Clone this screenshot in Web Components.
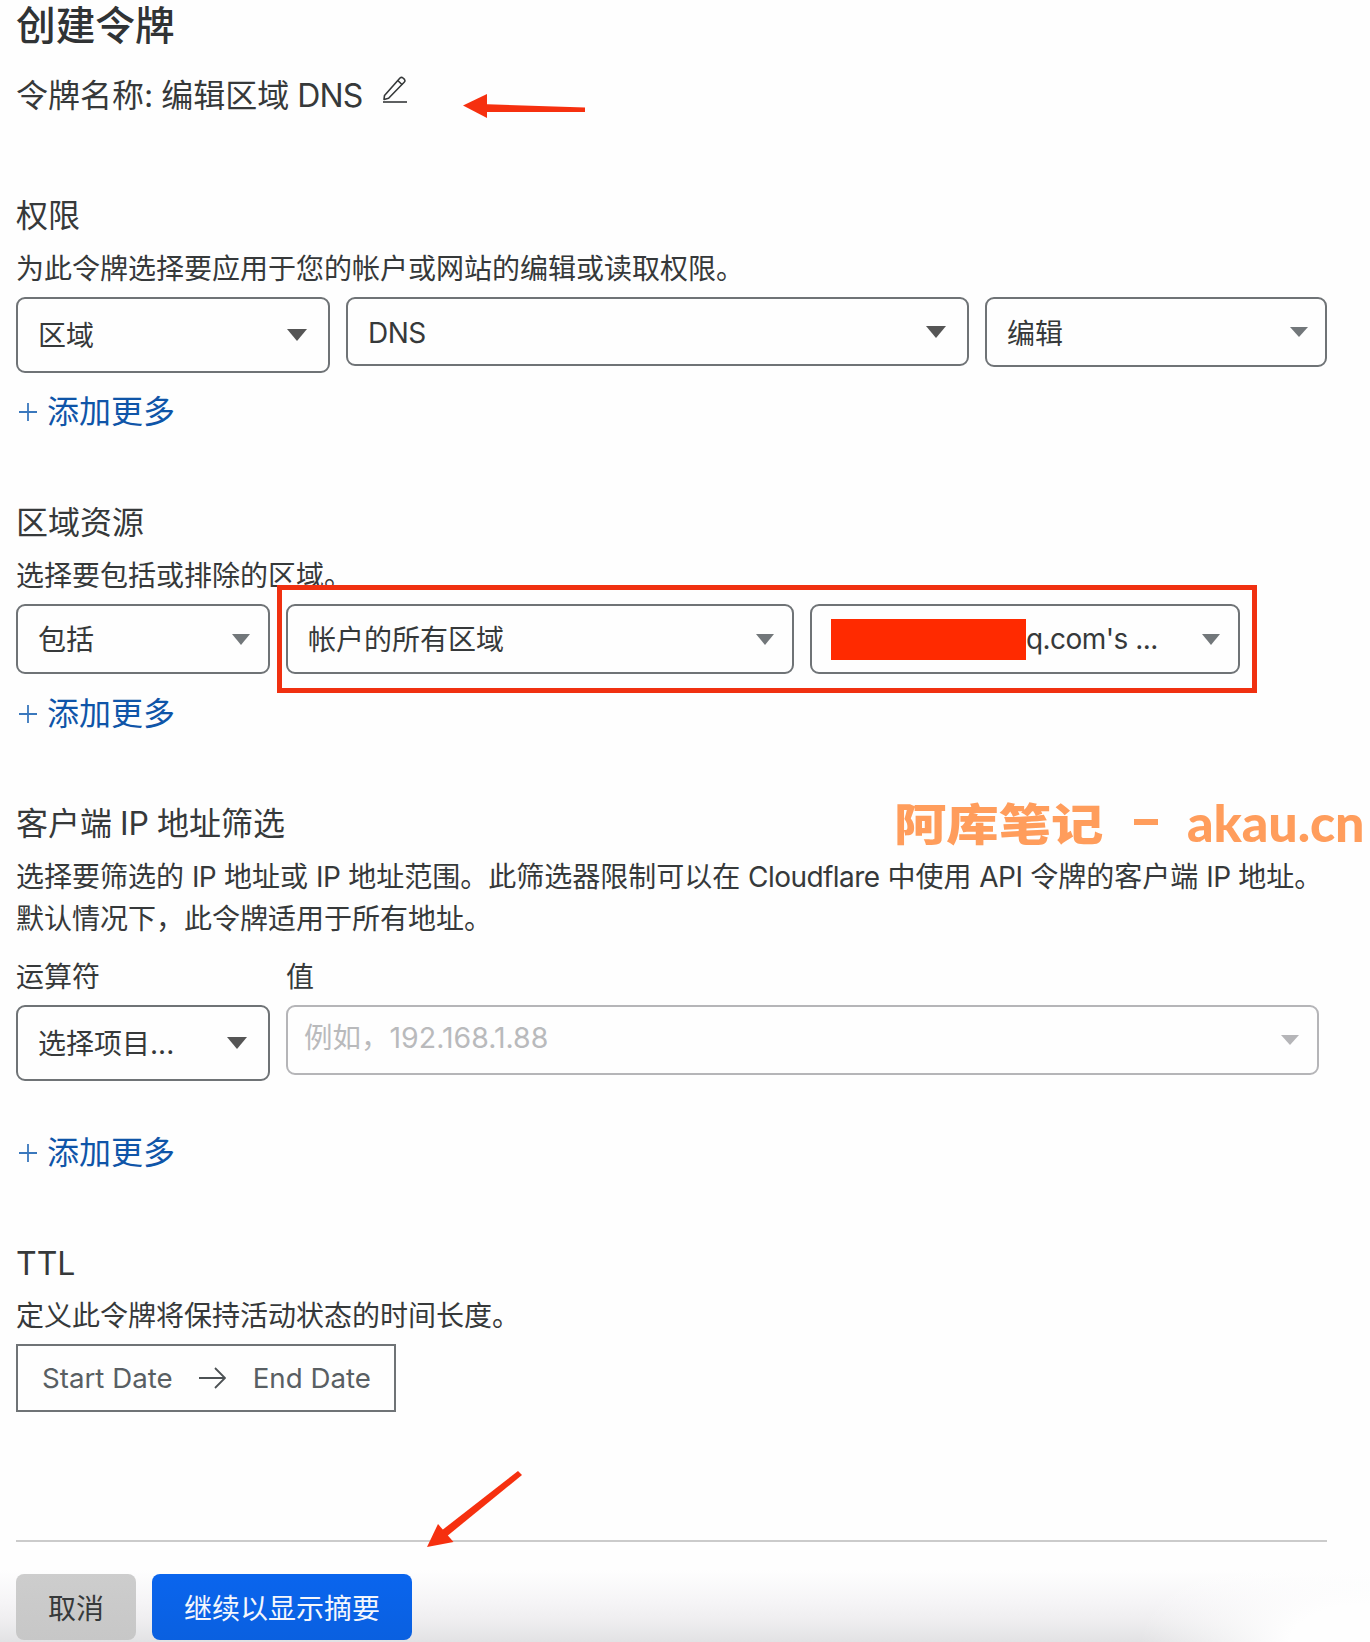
<!DOCTYPE html>
<html lang="zh-CN">
<head>
<meta charset="utf-8">
<title>创建令牌</title>
<style>
html,body{margin:0;padding:0;background:#fefefe}
body{font-family:Inter,"Noto Sans CJK SC",sans-serif;color:#36393a;overflow:hidden}
.mt7{margin-top:7px}
.l{letter-spacing:-.55px}
.n{letter-spacing:-.8px}
</style>
</head>
<body>
<token-page>
  <page-title>创建令牌</page-title>
  <token-name>令牌名称: 编辑区域 <span class="n">DNS</span></token-name>

  <form-section style="margin-top:76px" heading="权限">
    <section-desc>为此令牌选择要应用于您的帐户或网站的编辑或读取权限。</section-desc>
    <field-row class="mt7">
      <cf-select style="width:314px;height:76px;--caret-w:20px;--caret-h:12px;--caret:#555;--caret-r:21px;--pb:2px">区域</cf-select>
      <cf-select style="width:623px;height:69px;--caret-w:20px;--caret-h:12px;--caret:#555;--caret-r:21px;--pt:2px"><span class="l">DNS</span></cf-select>
      <cf-select style="width:342px;height:70px;--caret-w:19px;--caret-h:10px;--caret-r:17px">编辑</cf-select>
    </field-row>
    <add-more style="margin-top:17px">添加更多</add-more>
  </form-section>

  <form-section style="margin-top:67px" heading="区域资源">
    <section-desc>选择要包括或排除的区域。</section-desc>
    <field-row class="mt7">
      <cf-select style="width:254px;height:70px;--pb:2px">包括</cf-select>
      <cf-select style="width:508px;height:70px;--pb:2px">帐户的所有区域</cf-select>
      <cf-select style="width:430px;height:70px;--pad:19px"><redact-bar></redact-bar><span class="l">q.com's ...</span></cf-select>
      <red-frame></red-frame>
    </field-row>
    <add-more style="margin-top:18px">添加更多</add-more>
  </form-section>

  <form-section style="margin-top:66px" heading="客户端 IP 地址筛选">
    <section-desc>选择要筛选的 <span class="l">IP</span> 地址或 <span class="l">IP</span> 地址范围。此筛选器限制可以在 <span class="l">Cloudflare</span> 中使用 <span class="l">API</span> 令牌的客户端 <span class="l">IP</span> 地址。<br>默认情况下，此令牌适用于所有地址。</section-desc>
    <field-row style="margin-top:17px">
      <field-label style="width:254px">运算符</field-label>
      <field-label>值</field-label>
    </field-row>
    <field-row style="margin-top:8px">
      <cf-select style="width:254px;height:76px;--caret-w:20px;--caret-h:12px;--caret:#555;--caret-r:21px;--pb:3px">选择项目...</cf-select>
      <cf-select disabled style="width:1033px;height:70px;--pad:16px;--caret-w:19px;--caret-h:10px;--pb:9px;font-size:28.5px">例如，192.168.1.88</cf-select>
    </field-row>
    <add-more style="margin-top:50px">添加更多</add-more>
  </form-section>

  <form-section style="margin-top:67px" heading="TTL">
    <section-desc style="margin-top:9px">定义此令牌将保持活动状态的时间长度。</section-desc>
    <date-range class="mt7"></date-range>
  </form-section>

  <action-bar>
    <cf-button style="width:120px">取消</cf-button>
    <cf-button primary style="width:260px">继续以显示摘要</cf-button>
  </action-bar>
</token-page>

<script>
function def(name, css, html){
  customElements.define(name, class extends HTMLElement{
    constructor(){
      super();
      this.attachShadow({mode:'open'}).innerHTML='<style>'+css+'</style>'+html;
    }
  });
}
const FONT='font-family:Inter,"Noto Sans CJK SC",sans-serif;';

def('token-page',`
  :host{display:block;position:relative;box-sizing:border-box;width:1370px;height:1642px;padding:0 43px 0 16px;${FONT}color:#36393a;
    background:
      radial-gradient(ellipse 230px 110px at 100% 100%,#fefefe 35%,rgba(254,254,254,0) 100%),
      linear-gradient(to bottom,#fefefe 0,#fefefe 1570px,#f6f5f7 1600px,#efeef0 1620px,#e2e2e4 1642px);}
  .arrow{position:absolute;left:0;top:0;pointer-events:none}
  .mark{position:absolute;left:894px;top:796px;height:52px;display:flex;align-items:center;color:#ff9d5c;font-weight:900;white-space:nowrap;pointer-events:none}
  .cjk{font-size:44px;line-height:52px;display:inline-block;width:208px;transform:scaleX(1.19);transform-origin:left center;font-family:"Noto Sans CJK SC",sans-serif}
  .dash{width:24px;height:6px;background:#ff9d5c;margin-left:32px;margin-right:29px}
  .lat{font-size:52px;line-height:52px;font-family:Lato,Inter,sans-serif;letter-spacing:-.1px}
`,`<slot></slot>
  <svg class="arrow" width="1370" height="1642" viewBox="0 0 1370 1642" aria-hidden="true">
    <path d="M480 104 L585 107.5 L585 112 L480 112 Z" fill="#f6300f"/>
    <path d="M463 105.5 L487 94 L487 118 Z" fill="#f6300f"/>
    <path d="M518 1471 L522 1475 L446 1537 L441 1531 Z" fill="#f6300f"/>
    <path d="M427 1547 L438 1524 L453.5 1542 Z" fill="#f6300f"/>
  </svg>
  <div class="mark"><span class="cjk">阿库笔记</span><span class="dash"></span><span class="lat">akau.cn</span></div>`);

def('page-title',`:host{display:block;font-size:39.7px;line-height:52px;font-weight:500;color:#303335}`,`<slot></slot>`);

def('token-name',`
  :host{display:flex;align-items:center;margin-top:22px;height:44px;font-size:32px;line-height:44px;white-space:pre;word-spacing:-1px}
  svg{margin-left:19px;margin-top:-14px;flex:none}
`,`<slot></slot><svg width="26" height="28" viewBox="0 0 26 28" fill="none" stroke="#36393a" stroke-width="1.6" aria-hidden="true">
  <path d="M2.5 20.5 L18 3 Q19.5 1.6 21 3 L22.5 4.4 Q23.6 5.8 22.4 7 L6.6 23.2 L2 24.4 Z" stroke-linejoin="round"/>
  <path d="M15.8 5.5 L20.2 9.8"/>
  <path d="M1 27 H25"/>
</svg>`);

def('form-section',`
  :host{display:block}
  .h{font-size:32px;line-height:44px;color:#36393a;word-spacing:-1px}
`,`<div class="h"></div><slot></slot>`);
customElements.whenDefined('form-section').then(()=>{
  document.querySelectorAll('form-section').forEach(s=>{s.shadowRoot.querySelector('.h').textContent=s.getAttribute('heading')});
});

def('section-desc',`:host{display:block;margin-top:10px;font-size:28px;line-height:42px;color:#36393a;white-space:nowrap}`,`<slot></slot>`);

def('field-row',`:host{display:flex;align-items:flex-start;gap:16px;position:relative}`,`<slot></slot>`);

def('field-label',`:host{display:block;font-size:28px;line-height:40px;color:#36393a}`,`<slot></slot>`);

def('cf-select',`
  :host{display:flex;flex:none;box-sizing:border-box;border:2px solid #6f7376;border-radius:9px;background:#fefefe;font-size:28px;color:#36393a;white-space:nowrap}
  :host([disabled]){border-color:#b5b5b8;color:#b9babc}
  .in{flex:1;display:flex;align-items:center;justify-content:space-between;padding:0 var(--caret-r,18px) 0 var(--pad,20px);min-width:0}
  .t{display:flex;align-items:center;padding-bottom:var(--pb,0);padding-top:var(--pt,0)}
  .c{flex:none;width:0;height:0;border-left:calc(var(--caret-w,19px)/2) solid transparent;border-right:calc(var(--caret-w,19px)/2) solid transparent;border-top:var(--caret-h,11px) solid var(--caret,#72777a)}
  :host([disabled]) .c{border-top-color:#b5b5b8}
`,`<div class="in"><span class="t"><slot></slot></span><span class="c"></span></div>`);

def('redact-bar',`:host{display:inline-block;width:195px;height:41px;background:#ff2a00}`,``);

def('red-frame',`:host{position:absolute;left:261px;top:-19px;width:980px;height:108px;box-sizing:border-box;border:5px solid #f03010;pointer-events:none}`,``);

def('add-more',`
  :host{display:flex;align-items:center;height:44px;font-size:32px;line-height:44px;color:#0f55a8}
  svg{margin:0 10px 0 3px;flex:none}
`,`<svg width="18" height="18" viewBox="0 0 18 18" stroke="#3a78bd" stroke-width="1.8" aria-hidden="true"><path d="M9 0V18M0 9H18"/></svg><slot></slot>`);

def('date-range',`
  :host{display:flex;align-items:center;box-sizing:border-box;width:380px;height:68px;border:2px solid #6f7376;background:#fefefe;padding-left:24px;font-size:27.7px;color:#595f63;white-space:nowrap}
  svg{flex:none;margin:0 27px 0 26px}
`,`<span>Start Date</span><svg width="27" height="22" viewBox="0 0 27 22" fill="none" stroke="#4c5154" stroke-width="1.8" aria-hidden="true"><path d="M0 11H26M16 1L26 11L16 21"/></svg><span>End Date</span>`);

def('action-bar',`
  :host{display:flex;gap:16px;margin-top:128px;border-top:2px solid #cbcbcb;padding-top:32px;width:1311px}
`,`<slot></slot>`);

def('cf-button',`
  :host{display:flex;align-items:center;justify-content:center;height:66px;box-sizing:border-box;border-radius:8px;background:linear-gradient(#cdcdcd,#c7c7c7);color:#36393a;font-size:28px}
  :host([primary]){background:linear-gradient(#0a65ee,#0a60e0);color:#f4f7fd}
`,`<slot></slot>`);
</script>
</body>
</html>
